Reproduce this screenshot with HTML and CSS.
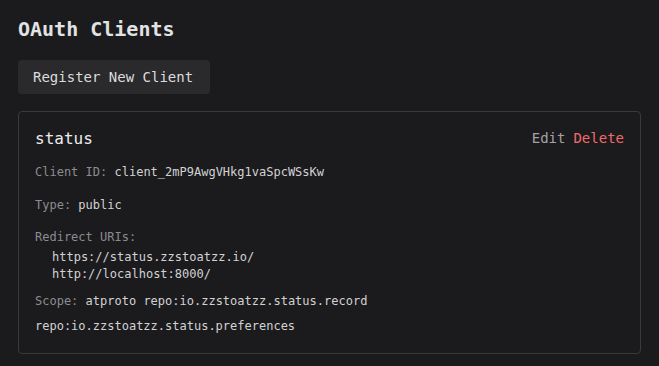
FILE: index.html
```html
<html lang="en">
<head>
  <meta charset="UTF-8">
  <title>OAuth Clients</title>
  <meta name="viewport" content="width=device-width, initial-scale=1.0"/>
  <link rel="stylesheet" href="styles.css">
</head>
<body>
  <div class="page">
    <h1 class="title">OAuth Clients</h1>
    <button class="btn-register">Register New Client</button>

    <div class="client-card">
      <div class="card-header">
        <span class="client-name">status</span>
        <div class="actions">
          <button class="link-edit">Edit</button>
          <button class="link-delete">Delete</button>
        </div>
      </div>

      <div class="field">
        <span class="label">Client ID:</span> <span class="value">client_2mP9AwgVHkg1vaSpcWSsKw</span>
      </div>
      <div class="field">
        <span class="label">Type:</span> <span class="value">public</span>
      </div>
      <div class="field field-uris">
        <span class="label">Redirect URIs:</span>
        <ul class="uri-list">
          <li>https://status.zzstoatzz.io/</li>
          <li>http://localhost:8000/</li>
        </ul>
      </div>
      <div class="field field-scope">
        <div><span class="label">Scope:</span> <span class="value">atproto repo:io.zzstoatzz.status.record</span></div>
        <div class="value">repo:io.zzstoatzz.status.preferences</div>
      </div>
    </div>
  </div>
</body>
</html>
```

FILE: styles.css
```css
body {
  margin: 0;
  background: #1b1b1d;
  font-family: "DejaVu Sans Mono", "Liberation Mono", monospace;
  color: #d4d4d6;
}

.page {
  padding: 17px 18px 0 18px;
}

.title {
  margin: 0 0 19px 0;
  font-size: 20px;
  line-height: 24px;
  font-weight: bold;
  color: #e2e2e4;
}

button {
  font-family: inherit;
  border: none;
  background: none;
  cursor: pointer;
  padding: 0;
}

.btn-register {
  background: #2a2a2c;
  color: #dcdcde;
  font-size: 14px;
  line-height: 18px;
  padding: 8px 17px 8px 15px;
  border-radius: 4px;
}

.client-card {
  margin-top: 17px;
  border: 1px solid #3a3a3d;
  border-radius: 4px;
  padding: 14px 16px 14px 16px;
}

.card-header {
  display: flex;
  justify-content: space-between;
  align-items: center;
  height: 24px;
  margin-bottom: 13px;
}

.client-name {
  font-size: 16px;
  color: #ececee;
}

.actions {
  display: flex;
  gap: 8px;
}

.link-edit,
.link-delete {
  font-size: 14px;
  line-height: 18px;
}

.link-edit { color: #a2a2a6; }
.link-delete { color: #f06a6a; }

.field {
  font-size: 12px;
  line-height: 18px;
  margin-bottom: 15px;
}

.label { color: #8c8c90; }
.value { color: #d2d2d4; }

.field-uris { margin-bottom: 9px; margin-top: -1px; }

.uri-list {
  list-style: none;
  margin: 3px 0 0 0;
  padding-left: 17px;
  line-height: 17px;
  color: #d2d2d4;
}

.field-scope {
  margin-bottom: 0;
  line-height: 25px;
  margin-top: -3px;
}
```
